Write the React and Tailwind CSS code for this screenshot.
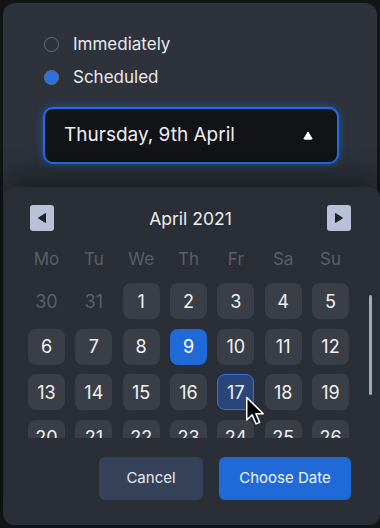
import React from "react";

const rows = [
  [["30", "out"], ["31", "out"], ["1"], ["2"], ["3"], ["4"], ["5"]],
  [["6"], ["7"], ["8"], ["9", "sel"], ["10"], ["11"], ["12"]],
  [["13"], ["14"], ["15"], ["16"], ["17", "hover"], ["18"], ["19"]],
  [["20"], ["21"], ["22"], ["23"], ["24"], ["25"], ["26"]],
];

function Cell({ d, kind }) {
  if (kind === "out") {
    return (
      <div className="h-[36px] flex items-center justify-center text-[18px] text-[#5b5f66]">
        {d}
      </div>
    );
  }
  if (kind === "sel") {
    return (
      <div className="h-[36px] rounded-[8px] bg-[#1f6ad6] flex items-center justify-center text-[18px] text-white">
        {d}
      </div>
    );
  }
  if (kind === "hover") {
    return (
      <div className="h-[36px] rounded-[8px] bg-[#2b4479] border-[1.5px] border-[#2f74e0] flex items-center justify-center text-[18px] text-[#eef1f7]">
        {d}
      </div>
    );
  }
  return (
    <div className="h-[36px] rounded-[8px] bg-[#3a3e46] flex items-center justify-center text-[18px] text-[#f1f2f4]">
      {d}
    </div>
  );
}

export default function App() {
  return (
    <div
      className="w-[380px] h-[528px] bg-[#121418] p-[3px] overflow-hidden"
      style={{ fontFamily: "Inter, 'Noto Sans', sans-serif" }}
    >
      <div className="h-[522px] rounded-[12px] bg-[#2d323b] flex flex-col">
        <div className="pt-[29px] pl-[40px] pr-[36px]">
          <div className="flex items-center h-6 gap-[14px]">
            <span className="w-[15px] h-[15px] rounded-full border-[1.5px] border-[#6c6e72] ml-[1px]" />
            <span className="text-[17px] text-[#e8eaed] leading-6">Immediately</span>
          </div>
          <div className="flex items-center h-6 gap-[14px] mt-[9px]">
            <span className="w-[15px] h-[15px] rounded-full border-[1.5px] border-[#6c6e72] bg-[#2a72e0] ml-[1px]" />
            <span className="text-[17px] text-[#e8eaed] leading-6">Scheduled</span>
          </div>
          <div className="mt-[18px] h-[57px] rounded-[10px] bg-[#111317] border-2 border-[#1f6fe6] shadow-[0_0_8px_rgba(31,111,230,0.55)] flex items-center justify-between pl-[19px] pr-[24px] mr-[2px]">
            <span className="text-[19px] text-[#eceef1]">Thursday, 9th April</span>
            <svg width="10" height="9" viewBox="0 0 10 9">
              <path d="M5 1 L9 7.5 Q9 8.2 8.2 8.2 L1.8 8.2 Q1 8.2 1 7.5 Z" fill="#ffffff" stroke="#ffffff" strokeWidth="1" strokeLinejoin="round" />
            </svg>
          </div>
        </div>

        <div className="relative mt-[23px] ml-[1px] -mr-[3px] flex-1 rounded-[10px] bg-[#2a2e36] shadow-[0_-14px_24px_rgba(0,0,0,0.35)] pt-[18px] pl-[26px] pr-[29px]">
          <div className="flex items-center justify-between h-[26px]">
            <div className="w-[24px] h-[26px] rounded-[3px] bg-[#b9c0d7] flex items-center justify-center">
              <svg width="10" height="12" viewBox="0 0 10 12">
                <path d="M1.5 6 L8.5 1.5 L8.5 10.5 Z" fill="#1e2128" stroke="#1e2128" strokeWidth="1" strokeLinejoin="round" />
              </svg>
            </div>
            <span className="text-[17.5px] text-[#eceef1] mt-[2px]">April 2021</span>
            <div className="w-[24px] h-[26px] rounded-[3px] bg-[#b9c0d7] flex items-center justify-center">
              <svg width="10" height="12" viewBox="0 0 10 12">
                <path d="M8.5 6 L1.5 1.5 L1.5 10.5 Z" fill="#1e2128" stroke="#1e2128" strokeWidth="1" strokeLinejoin="round" />
              </svg>
            </div>
          </div>

          <div className="mt-[16px] w-[321px] -ml-[2px] grid grid-cols-7 gap-x-[10.33px] h-6 items-center">
            {["Mo", "Tu", "We", "Th", "Fr", "Sa", "Su"].map((h) => (
              <div key={h} className="text-center text-[17px] text-[#5b5f66] leading-6">
                {h}
              </div>
            ))}
          </div>

          <div className="mt-[12px] h-[155px] overflow-hidden -ml-[2px] w-[321px]">
            <div className="grid grid-cols-7 gap-x-[10.33px] gap-y-[9.5px]">
              {rows.flat().map(([d, kind], i) => (
                <Cell key={i} d={d} kind={kind} />
              ))}
            </div>
          </div>

          <div className="mt-[19px] flex justify-end gap-[16px]">
            <button className="w-[104px] h-[43px] rounded-[6px] bg-[#354259] text-[15px] text-[#e6eaf2]">
              Cancel
            </button>
            <button className="w-[132px] h-[43px] rounded-[6px] bg-[#1f6ad6] text-[15px] text-[#eef2fa]">
              Choose Date
            </button>
          </div>

          <div className="absolute right-[8px] top-[108px] w-[3px] h-[100px] rounded-full bg-[#a8aab0]" />

          <svg
            className="absolute left-[241px] top-[209px]"
            width="20"
            height="30"
            viewBox="0 0 13 20"
          >
            <path
              d="M1 1 L1 16 L4.6 12.6 L7.2 18.6 L9.6 17.6 L7.1 11.8 L12 11.8 Z"
              fill="#000000"
              stroke="#ffffff"
              strokeWidth="1"
              strokeLinejoin="round"
            />
          </svg>
        </div>
      </div>
    </div>
  );
}
